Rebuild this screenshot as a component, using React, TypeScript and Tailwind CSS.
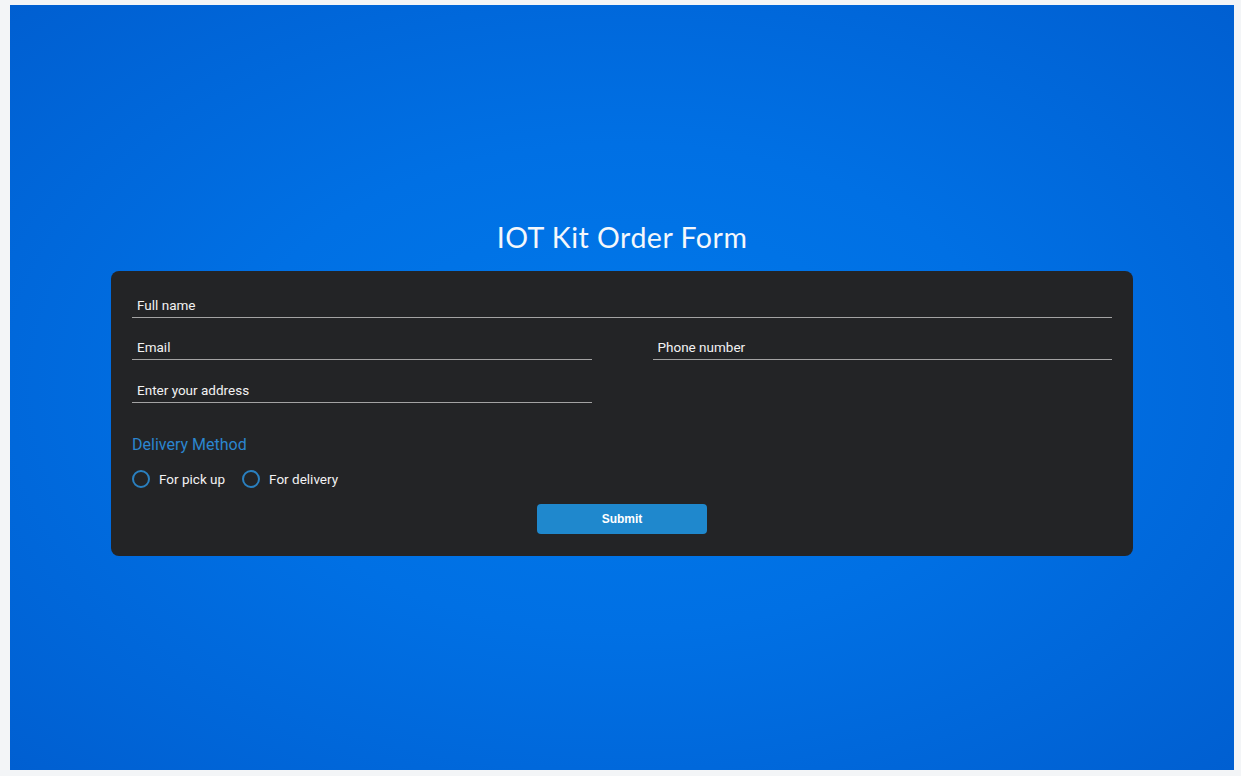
import { useState } from 'react'

const fieldClass =
  'w-full h-[30px] bg-transparent border-0 border-b border-[#a3a3a3] px-[5px] pt-[6px] text-[13.5px] text-[#f2f2f2] placeholder:text-[#f2f2f2] outline-none font-["Roboto",sans-serif]'

function Radio({ label, checked, onClick }: { label: string; checked: boolean; onClick: () => void }) {
  return (
    <button type="button" onClick={onClick} className="flex items-center gap-[9px]">
      <span className="flex h-[18px] w-[18px] items-center justify-center rounded-full border-2 border-[#2a80c0]">
        {checked && <span className="h-[8px] w-[8px] rounded-full bg-[#2a80c0]" />}
      </span>
      <span className="text-[13.5px] text-[#f2f2f2] font-['Roboto',sans-serif]">{label}</span>
    </button>
  )
}

export default function App() {
  const [method, setMethod] = useState<'pickup' | 'delivery' | null>(null)

  return (
    <div className="h-[776px] w-full bg-[#f3f5f7] pl-[10px] pt-[5px] pr-[7px] pb-[6px]">
      <div className="flex h-full w-full flex-col items-center justify-center pb-[1px] bg-[radial-gradient(ellipse_at_center,#0079ea_0%,#0070e4_45%,#005fd1_100%)]">
        <h1 className="mb-[15px] text-[28.5px] leading-[38px] tracking-[0.5px] text-[#f4f7fb] font-['Lato',sans-serif]">
          IOT Kit Order Form
        </h1>
        <form
          onSubmit={(e) => e.preventDefault()}
          className="w-[1022px] rounded-[8px] bg-[#232426] px-[21px] pt-[17px] pb-[22px]"
        >
          <input className={fieldClass} placeholder="Full name" />
          <div className="mt-[12px] grid grid-cols-2 gap-x-[61px] gap-y-[13px]">
            <input className={fieldClass} placeholder="Email" />
            <input className={fieldClass} placeholder="Phone number" />
            <input className={fieldClass} placeholder="Enter your address" />
          </div>
          <p className="mt-[32px] text-[16px] leading-[20px] text-[#2b86cf] font-['Roboto',sans-serif]">
            Delivery Method
          </p>
          <div className="mt-[14px] flex items-center gap-[17px]">
            <Radio label="For pick up" checked={method === 'pickup'} onClick={() => setMethod('pickup')} />
            <Radio label="For delivery" checked={method === 'delivery'} onClick={() => setMethod('delivery')} />
          </div>
          <div className="mt-[15px] flex justify-center">
            <button
              type="submit"
              className="h-[30px] w-[170px] rounded-[4px] bg-[#1f88cd] text-[12px] font-bold text-white font-['Liberation_Sans',Arial,sans-serif]"
            >
              Submit
            </button>
          </div>
        </form>
      </div>
    </div>
  )
}
